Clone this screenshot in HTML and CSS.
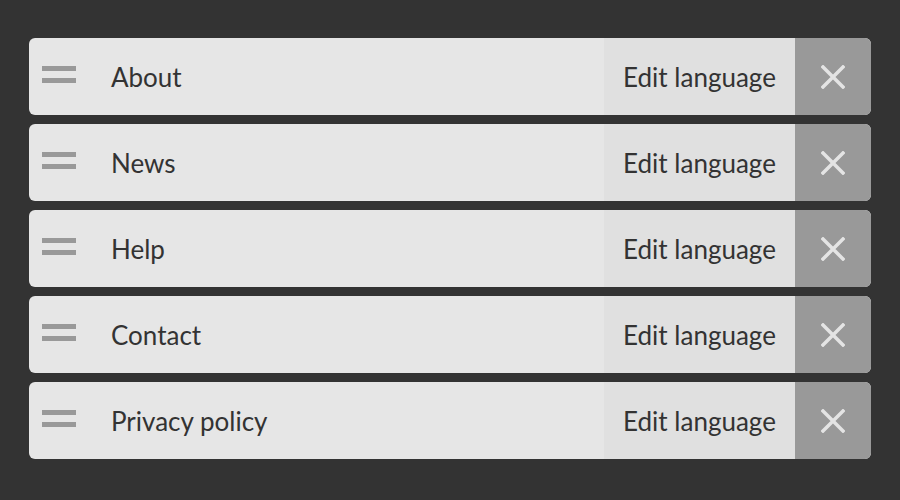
FILE: index.html
```html
<!DOCTYPE html>
<html>
<head>
<meta charset="utf-8">
<link rel="stylesheet" href="styles.css">
</head>
<body>
<ul class="list">
  <li class="row">
    <span class="handle"><i></i><i></i></span>
    <span class="label">About</span>
    <span class="edit">Edit language</span>
    <span class="remove"><svg width="24" height="24" viewBox="0 0 24 24"><path d="M2 2L22 22M22 2L2 22" stroke="#e4e4e4" stroke-width="3.5" stroke-linecap="square"/></svg></span>
  </li>
  <li class="row">
    <span class="handle"><i></i><i></i></span>
    <span class="label">News</span>
    <span class="edit">Edit language</span>
    <span class="remove"><svg width="24" height="24" viewBox="0 0 24 24"><path d="M2 2L22 22M22 2L2 22" stroke="#e4e4e4" stroke-width="3.5" stroke-linecap="square"/></svg></span>
  </li>
  <li class="row">
    <span class="handle"><i></i><i></i></span>
    <span class="label">Help</span>
    <span class="edit">Edit language</span>
    <span class="remove"><svg width="24" height="24" viewBox="0 0 24 24"><path d="M2 2L22 22M22 2L2 22" stroke="#e4e4e4" stroke-width="3.5" stroke-linecap="square"/></svg></span>
  </li>
  <li class="row">
    <span class="handle"><i></i><i></i></span>
    <span class="label">Contact</span>
    <span class="edit">Edit language</span>
    <span class="remove"><svg width="24" height="24" viewBox="0 0 24 24"><path d="M2 2L22 22M22 2L2 22" stroke="#e4e4e4" stroke-width="3.5" stroke-linecap="square"/></svg></span>
  </li>
  <li class="row">
    <span class="handle"><i></i><i></i></span>
    <span class="label">Privacy policy</span>
    <span class="edit">Edit language</span>
    <span class="remove"><svg width="24" height="24" viewBox="0 0 24 24"><path d="M2 2L22 22M22 2L2 22" stroke="#e4e4e4" stroke-width="3.5" stroke-linecap="square"/></svg></span>
  </li>
</ul>
</body>
</html>
```
FILE: styles.css
```css
html, body {
  margin: 0;
  padding: 0;
  background: #333333;
  width: 900px;
  height: 500px;
  overflow: hidden;
}
.list {
  list-style: none;
  margin: 0;
  padding: 38px 29px 0 29px;
  display: flex;
  flex-direction: column;
  gap: 9px;
  font-family: Lato, "Open Sans", sans-serif;
  font-size: 26px;
  color: #333333;
}
.row {
  display: flex;
  align-items: stretch;
  height: 77px;
  background: #e6e6e6;
  border-radius: 6px;
  overflow: hidden;
}
.handle {
  width: 34px;
  padding-left: 13px;
  padding-bottom: 4px;
  display: flex;
  flex-direction: column;
  justify-content: center;
  gap: 7px;
}
.handle i {
  display: block;
  height: 5px;
  background: #999999;
}
.label {
  flex: 1;
  display: flex;
  align-items: center;
  padding-left: 35px;
}
.edit {
  width: 191px;
  display: flex;
  align-items: center;
  justify-content: center;
  background: #e0e0e0;
}
.remove {
  width: 76px;
  display: flex;
  align-items: center;
  justify-content: center;
  background: #999999;
}
```
